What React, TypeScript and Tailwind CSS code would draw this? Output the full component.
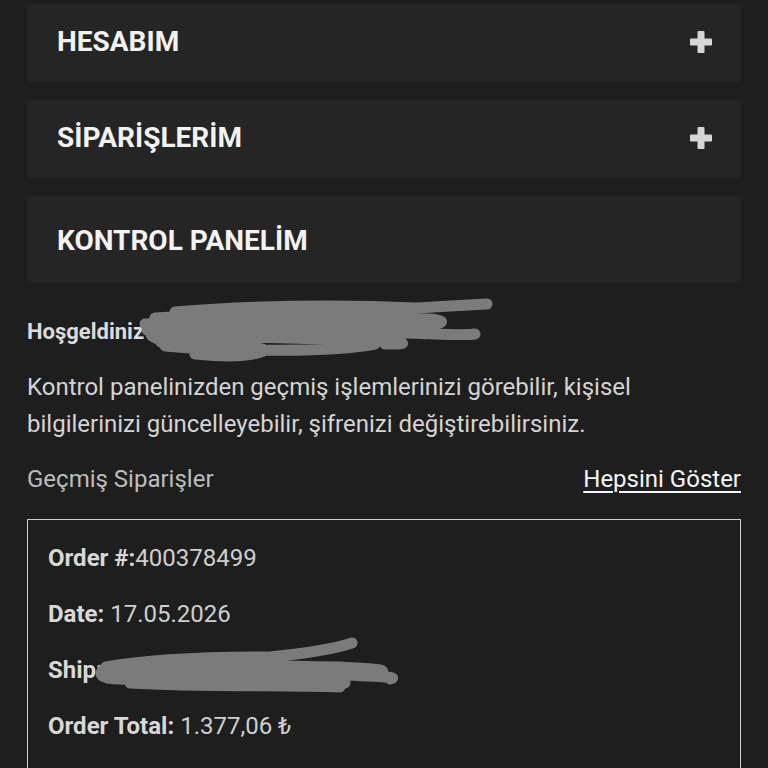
const Plus = () => (
  <svg width="24" height="24" viewBox="0 0 24 24" className="text-[#d6d6d6]">
    <rect x="8.5" y="1" width="7" height="22" rx="1" fill="currentColor" />
    <rect x="1" y="8.5" width="22" height="7" rx="1" fill="currentColor" />
  </svg>
);

const Scribble = ({ w, h, d }: { w: number; h: number; d: string }) => (
  <svg width={w} height={h} viewBox={`0 0 ${w} ${h}`} className="absolute">
    <path d={d} fill="none" stroke="#7b7b7b" strokeWidth="11" strokeLinecap="round" strokeLinejoin="round" />
  </svg>
);

const Section = ({ title, plus, tall }: { title: string; plus?: boolean; tall?: boolean }) => (
  <div
    className={`flex items-center justify-between bg-[#252525] rounded-sm pl-[30px] pr-[28px] ${
      tall ? "h-[87px] pt-[2px]" : "h-[78px] pb-[2px]"
    }`}
  >
    <h2 className="text-[28px] font-bold text-[#f2f2f2] leading-[32px]">{title}</h2>
    {plus && <Plus />}
  </div>
);

export default function App() {
  return (
    <div
      className="min-h-[768px] bg-[#1e1e1e] px-[27px] pt-[4px] overflow-hidden"
      style={{ fontFamily: "Roboto, 'Liberation Sans', sans-serif" }}
    >
      <div className="flex flex-col gap-[18px]">
        <Section title="HESABIM" plus />
        <Section title="SİPARİŞLERİM" plus />
        <Section title="KONTROL PANELİM" tall />
      </div>

      <div className="relative mt-[35px] h-[28px] flex items-center">
        <span className="text-[22px] font-bold text-[#dcdcdc] leading-[28px]">Hoşgeldiniz</span>
        <div className="absolute left-[108px] top-[-20px]">
          <Scribble
            w={360}
            h={70}
            d="M40 14 C110 8 200 6 280 10 C320 8 345 6 352 6 M20 20 C90 16 180 14 250 18 C290 20 320 22 300 26 M10 26 C60 22 150 24 240 26 C290 28 310 34 290 36 M12 32 C80 30 170 30 250 34 C300 36 330 38 340 36 M18 38 C80 38 160 40 230 42 C270 44 280 46 250 46 M26 44 C80 44 120 48 130 52 C120 58 100 60 60 56 M30 48 C100 54 200 54 240 46 M20 26 C14 34 12 40 30 42"
          />
        </div>
      </div>

      <p className="mt-[23px] text-[24px] leading-[37px] text-[#d4d4d4]">
        Kontrol panelinizden geçmiş işlemlerinizi görebilir, kişisel
        <br />
        bilgilerinizi güncelleyebilir, şifrenizi değiştirebilirsiniz.
      </p>

      <div className="mt-[22px] flex items-center justify-between h-[28px]">
        <span className="text-[24px] text-[#bdbdbd] leading-[28px]">Geçmiş Siparişler</span>
        <a className="text-[24px] text-[#f5f5f5] leading-[28px] underline decoration-2 underline-offset-[4px]">
          Hepsini Göster
        </a>
      </div>

      <div className="mt-[26px] border border-[#d0d0d0] px-[20px] pt-[25px] pb-[30px] flex flex-col gap-[29px]">
        <div className="text-[24px] text-[#cfcfcf] leading-[27px]">
          <b className="text-[#d8d8d8]">Order #:</b>400378499
        </div>
        <div className="text-[24px] text-[#cfcfcf] leading-[27px]">
          <b className="text-[#d8d8d8]">Date:</b> 17.05.2026
        </div>
        <div className="relative text-[24px] text-[#cfcfcf] leading-[27px]">
          <b className="text-[#d8d8d8]">Ship:</b>
          <div className="absolute left-[42px] top-[-20px]">
            <Scribble
              w={320}
              h={62}
              d="M16 30 C60 22 120 20 180 20 C220 16 250 10 262 6 M12 34 C80 28 160 28 250 30 C280 32 300 32 290 36 M20 38 C90 36 170 36 260 38 C290 40 310 40 300 42 M28 42 C100 44 180 42 255 46 M40 46 C110 50 190 48 250 50 M16 30 C6 38 12 42 30 42"
            />
          </div>
        </div>
        <div className="text-[24px] text-[#cfcfcf] leading-[27px]">
          <b className="text-[#d8d8d8]">Order Total:</b> 1.377,06 ₺
        </div>
        <div className="h-[40px]" />
      </div>
    </div>
  );
}
